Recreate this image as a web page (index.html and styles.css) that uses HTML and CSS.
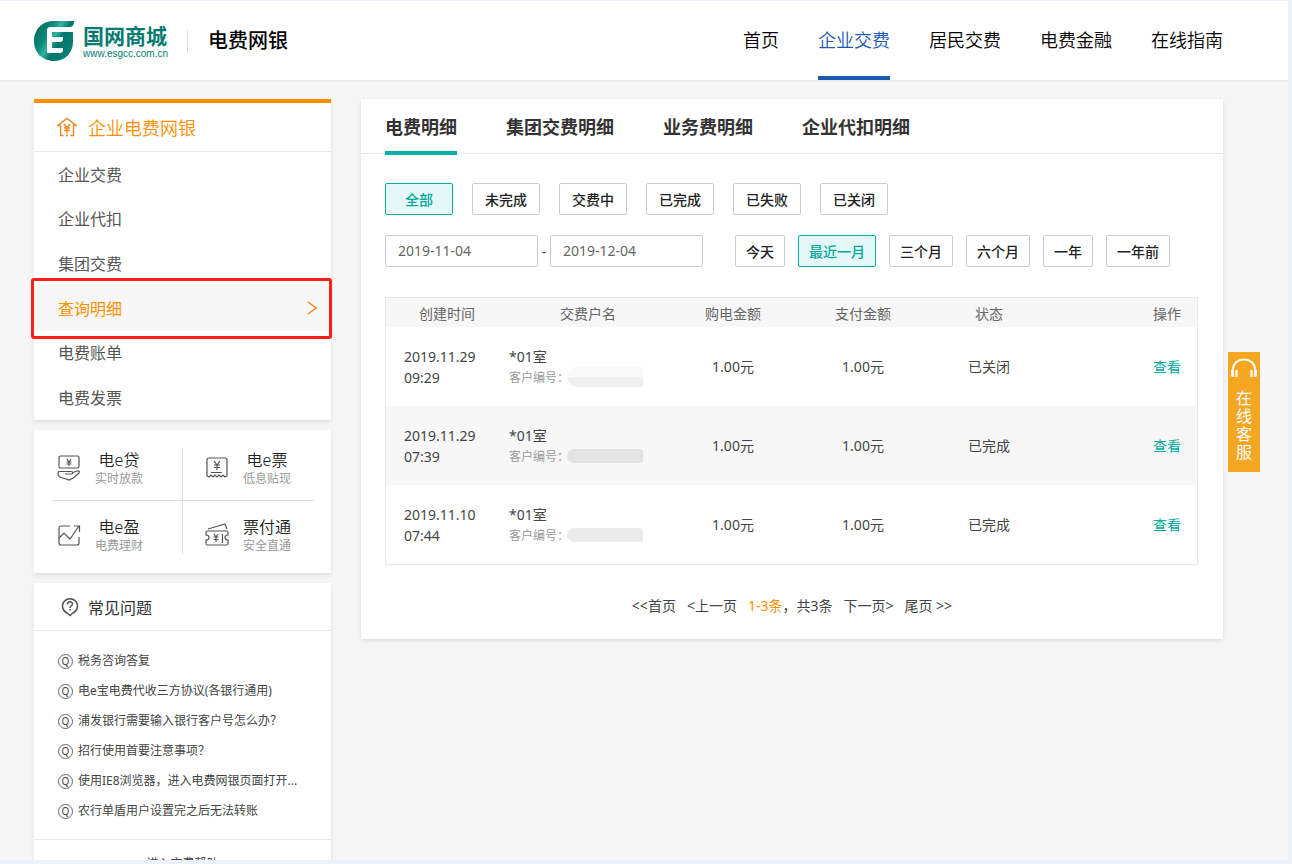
FILE: index.html
```html
<!DOCTYPE html>
<html lang="zh-CN">
  <head>
    <meta charset="UTF-8" />
    <meta name="viewport" content="width=device-width, initial-scale=1.0" />
    <title>电费网银</title>
    <link rel="stylesheet" href="styles.css">
  </head>
  <body>
    <div class="page">
      <header class="header">
        <a class="logo" href="#">
          <svg class="logo-mark" viewBox="0 0 42 42" aria-hidden="true">
            <defs>
              <linearGradient id="logoFill" x1="0" y1="0.2" x2="1" y2="0.8">
                <stop offset="0" stop-color="#04695f" />
                <stop offset="0.3" stop-color="#0b8a7c" />
                <stop offset="0.45" stop-color="#35b3a0" />
                <stop offset="0.6" stop-color="#04766c" />
                <stop offset="1" stop-color="#0b8478" />
              </linearGradient>
            </defs>
            <path fill="url(#logoFill)" d="M41 1H20C9 1 1 10 1 21s8 20 20 20c11 0 19-8 19-19V12H37V7c3 0 4-3 4-6z" />
            <path fill="#fff" d="M40 7H18c-3 0-4 1-4 4v22h13c2 0 3-1 3-3v-2H19v-6h8c2 0 3-1 3-3v-2H19v-5h18c2 0 3-1 4-2z" />
          </svg>
          <span class="logo-text">
            <strong>国网商城</strong>
            <small>www.esgcc.com.cn</small>
          </span>
        </a>
        <h1 class="site-name">电费网银</h1>
        <nav class="nav">
          <a href="#">首页</a>
          <a class="active" href="#">企业交费</a>
          <a href="#">居民交费</a>
          <a href="#">电费金融</a>
          <a href="#">在线指南</a>
        </nav>
      </header>

      <div class="content">
        <aside class="sidebar">
          <section class="card menu">
            <h2 class="menu-title">
              <svg viewBox="0 0 20 20" aria-hidden="true">
                <path d="M3.500 8.500H1L10 1.500l9 7h-2.500V18.500h-3M3.500 8.500V18.500h3M9 18.500h2" />
                <path d="M7 7l3 4 3-4M7 11h6M7 13.500h6M10 11v5.500" />
              </svg>
              企业电费网银
            </h2>
            <ul class="menu-list">
              <li><a href="#">企业交费</a></li>
              <li><a href="#">企业代扣</a></li>
              <li><a href="#">集团交费</a></li>
              <li class="active">
                <a href="#">查询明细
                  <svg viewBox="0 0 10 14" aria-hidden="true"><path d="M1 1l8 6-8 6" /></svg>
                </a>
              </li>
              <li><a href="#">电费账单</a></li>
              <li><a href="#">电费发票</a></li>
            </ul>
          </section>

          <section class="card services">
            <a href="#">
              <svg viewBox="0 0 24 26" aria-hidden="true">
                <rect x="2" y="1" width="20" height="12" rx="1.500" />
                <path d="M10 4l2 3 2-3M9.500 7h5M9.500 9h5M12 7v4" />
                <path d="M1 24v0M8 19h6c2.500 0 2.500-2.500 0-2.500H2c-1 0-1 1-1 2 0 3 2 4 5 4.500l6 2 5-2.500 5-4.500c1-1.500 0-2.500-2-2l-4 1.500" />
              </svg>
              <span><b>电e贷</b><small>实时放款</small></span>
            </a>
            <a href="#">
              <svg viewBox="0 0 24 26" aria-hidden="true">
                <path d="M2 21V5c0-1 .5-2 2-2h16c1.500 0 2 1 2 2v16l-2 1-2-2-2 2-2-2-2 2-2-2-2 2-2-2-2 2z" />
                <path d="M9 6l3 4 3-4M9 10h6M9 12.500h6M12 10v5M6 17.500h11" />
              </svg>
              <span><b>电e票</b><small>低息贴现</small></span>
            </a>
            <a href="#">
              <svg viewBox="0 0 24 26" aria-hidden="true">
                <path d="M13 4H4C2.500 4 2 5 2 6v15c0 1.500 1 2 2 2h16c1.500 0 2-1 2-2v-6" />
                <path d="M2 16l5-5 6 6L22 4M17 4h5.500v6" />
              </svg>
              <span><b>电e盈</b><small>电费理财</small></span>
            </a>
            <a href="#">
              <svg viewBox="0 0 24 26" aria-hidden="true">
                <path d="M2.500 9h19c1 0 1.500.5 1.500 1.500V13c-4 0-4 5 0 5v3.500c0 1-.5 1.500-1.500 1.500h-19c-1 0-1.500-.5-1.500-1.500V18c4 0 4-5 0-5v-2.500C1 9.500 1.500 9 2.500 9z" />
                <path d="M3 7l17-5 2 5M9 12l2 3 2-3M8.500 15h5M8.500 17.500h5M11 15v5M17.500 12v9" />
              </svg>
              <span><b>票付通</b><small>安全直通</small></span>
            </a>
          </section>

          <section class="card faq">
            <h2 class="faq-title">
              <svg viewBox="0 0 18 20" aria-hidden="true">
                <path d="M9 18.500l-3-2.500a7.500 7.500 0 1 1 6 0z" />
                <path d="M6.500 7.500c0-3.500 5-3.500 5-.5 0 2-2.500 2-2.500 4M9 12v1.500" />
              </svg>
              常见问题
            </h2>
            <ul class="faq-list">
              <li><a href="#">税务咨询答复</a></li>
              <li><a href="#">电e宝电费代收三方协议(各银行通用)</a></li>
              <li><a href="#">浦发银行需要输入银行客户号怎么办？</a></li>
              <li><a href="#">招行使用首要注意事项？</a></li>
              <li><a href="#">使用IE8浏览器，进入电费网银页面打开...</a></li>
              <li><a href="#">农行单盾用户设置完之后无法转账</a></li>
            </ul>
            <a class="faq-more" href="#">进入交费帮助</a>
          </section>
        </aside>

        <main class="card main">
          <nav class="tabs">
            <a class="active" href="#">电费明细</a>
            <a href="#">集团交费明细</a>
            <a href="#">业务费明细</a>
            <a href="#">企业代扣明细</a>
          </nav>

          <form class="filters">
            <div class="status-row">
              <button type="button" class="active">全部</button>
              <button type="button">未完成</button>
              <button type="button">交费中</button>
              <button type="button">已完成</button>
              <button type="button">已失败</button>
              <button type="button">已关闭</button>
            </div>
            <div class="date-row">
              <div class="dates">
                <input type="text" value="2019-11-04" aria-label="开始日期" />
                <span>-</span>
                <input type="text" value="2019-12-04" aria-label="结束日期" />
              </div>
              <button type="button">今天</button>
              <button type="button" class="active">最近一月</button>
              <button type="button">三个月</button>
              <button type="button">六个月</button>
              <button type="button">一年</button>
              <button type="button">一年前</button>
            </div>
          </form>

          <table class="records">
            <colgroup>
              <col class="col-time" />
              <col class="col-name" />
              <col class="col-money" />
              <col class="col-money" />
              <col class="col-status" />
              <col />
            </colgroup>
            <thead>
              <tr>
                <th>创建时间</th>
                <th>交费户名</th>
                <th>购电金额</th>
                <th>支付金额</th>
                <th>状态</th>
                <th class="action">操作</th>
              </tr>
            </thead>
            <tbody>
              <tr>
                <td class="time">2019.11.29<br />09:29</td>
                <td class="name">*01室<small>客户编号：<i class="mask light"></i></small></td>
                <td>1.00元</td>
                <td>1.00元</td>
                <td>已关闭</td>
                <td class="action"><a href="#">查看</a></td>
              </tr>
              <tr>
                <td class="time">2019.11.29<br />07:39</td>
                <td class="name">*01室<small>客户编号：<i class="mask dark"></i></small></td>
                <td>1.00元</td>
                <td>1.00元</td>
                <td>已完成</td>
                <td class="action"><a href="#">查看</a></td>
              </tr>
              <tr>
                <td class="time">2019.11.10<br />07:44</td>
                <td class="name">*01室<small>客户编号：<i class="mask"></i></small></td>
                <td>1.00元</td>
                <td>1.00元</td>
                <td>已完成</td>
                <td class="action"><a href="#">查看</a></td>
              </tr>
            </tbody>
          </table>

          <div class="pager">
            <a href="#">&lt;&lt;首页</a>
            <a href="#">&lt;上一页</a>
            <span><em>1-3条</em>，共3条</span>
            <a href="#">下一页&gt;</a>
            <a href="#">尾页 &gt;&gt;</a>
          </div>
        </main>
      </div>

      <a class="service" href="#">
        <svg viewBox="0 0 28 20" aria-hidden="true">
          <path d="M3 12C3 -2 25 -2 25 12" />
          <path class="ear" d="M1 12h3v7H3c-1.500 0-2-1-2-2zM5.500 12h2v7h-2zM20.500 12h2v7h-2zM24 12h3v5c0 1-.5 2-2 2h-1z" />
        </svg>
        <span>在线客服</span>
      </a>
    </div>
  </body>
</html>
```
FILE: styles.css
```css
* {
  box-sizing: border-box;
}

body {
  margin: 0;
  height: 100vh;
  padding: 1px 4px 4px 0;
  overflow: hidden;
  background-color: #edf2fa;
  color: #444;
  font-family: "Noto Sans", "Noto Sans CJK SC", sans-serif;
  font-size: 14px;
}

a {
  color: inherit;
  text-decoration: none;
}

ul {
  list-style: none;
  margin: 0;
  padding: 0;
}

svg {
  fill: none;
  flex: none;
}

.page {
  position: relative;
  height: 100%;
  overflow: hidden;
  background-color: #f6f6f6;
}

.header {
  display: flex;
  align-items: center;
  height: 79px;
  padding: 0 65px 0 33px;
  background-color: #fff;
  box-shadow: 0 1px 3px rgba(0, 0, 0, 0.08);
}

.logo {
  display: flex;
  align-items: center;
  gap: 8px;
  padding-right: 19px;
  color: #047a70;
}

.logo-mark {
  width: 42px;
  height: 42px;
}

.logo-text strong,
.logo-text small {
  display: block;
}

.logo-text strong {
  font-size: 21px;
  line-height: 26px;
}

.logo-text small {
  font-family: "Liberation Sans", Arial, sans-serif;
  font-size: 10px;
  line-height: 10px;
}

.site-name {
  margin: 0;
  padding-left: 20px;
  border-left: 1px solid #ddd;
  color: #000;
  font-size: 20px;
  font-weight: 500;
  line-height: 22px;
}

.nav {
  display: flex;
  align-self: stretch;
  gap: 39px;
  margin-left: auto;
  color: #000;
  font-size: 18px;
  font-weight: 350;
  line-height: 78px;
}

.nav .active {
  border-bottom: 4px solid #1c5ab2;
  color: #1c5ab2;
}

.content {
  display: flex;
  align-items: flex-start;
  gap: 30px;
  padding: 19px 65px 0 34px;
}

.card {
  background-color: #fff;
  box-shadow: 0 2px 4px rgba(0, 0, 0, 0.1);
}

.sidebar {
  display: flex;
  flex-direction: column;
  flex: none;
  gap: 10px;
  width: 297px;
}

.menu {
  border-top: 4px solid #ff9000;
}

.menu-title {
  display: flex;
  align-items: center;
  gap: 11px;
  height: 49px;
  margin: 0;
  padding-left: 23px;
  border-bottom: 1px solid #e8e8e8;
  color: #ff9000;
  font-size: 18px;
  font-weight: 350;
}

.menu-title svg {
  width: 20px;
  height: 20px;
  stroke: #f08a24;
  stroke-width: 1.5;
}

.menu-list {
  display: grid;
  grid-auto-rows: 1fr;
  height: 268px;
  color: #555;
  font-size: 16px;
}

.menu-list li {
  position: relative;
}

.menu-list a {
  display: flex;
  align-items: center;
  justify-content: space-between;
  height: 100%;
  padding: 0 14px 1px 24px;
}

.menu-list .active {
  background-color: #f7f7f7;
  color: #ff9000;
}

.menu-list .active::after {
  content: "";
  position: absolute;
  inset: -8px -1px -8px -3px;
  border: 3px solid #ff1f14;
  border-radius: 3px;
  pointer-events: none;
}

.menu-list svg {
  width: 10px;
  height: 14px;
  stroke: #f08a24;
  stroke-width: 1.5;
}

.services {
  display: grid;
  grid-template-columns: 1fr 1fr;
  grid-auto-rows: 53px;
  padding: 18px 17px 19px 18px;
}

.services a {
  display: flex;
  align-items: center;
  gap: 14px;
  padding: 15px 0 0 5px;
}

.services a:nth-child(-n + 2) {
  padding: 0 0 13px 5px;
  border-bottom: 1px solid #ddd;
}

.services a:nth-child(odd) {
  border-right: 1px solid #ddd;
}

.services a:nth-child(even) {
  padding-left: 22px;
}

.services svg {
  width: 24px;
  height: 26px;
  stroke: #555;
  stroke-width: 1.2;
}

.services span {
  text-align: center;
}

.services b,
.services small {
  display: block;
}

.services b {
  font-size: 16px;
  font-weight: 350;
  line-height: 22px;
  color: #222;
}

.services small {
  color: #999;
  font-size: 12px;
  line-height: 16px;
}

.faq-title {
  display: flex;
  align-items: center;
  gap: 9px;
  height: 48px;
  margin: 0;
  padding-left: 27px;
  border-bottom: 1px solid #e8e8e8;
  color: #333;
  font-size: 16px;
  font-weight: 400;
}

.faq-title svg {
  width: 18px;
  height: 20px;
  stroke: #555;
  stroke-width: 1.5;
}

.faq-list {
  padding: 15px 24px 13px;
  font-size: 12px;
  line-height: 30px;
}

.faq-list li {
  display: flex;
  align-items: center;
  gap: 5px;
  white-space: nowrap;
}

.faq-list li::before {
  content: "Q";
  box-sizing: border-box;
  width: 15px;
  height: 15px;
  border: 1px solid #666;
  border-radius: 50%;
  font-size: 10px;
  line-height: 13px;
  text-align: center;
}

.faq-more {
  display: block;
  border-top: 1px solid #e8e8e8;
  font-size: 12px;
  line-height: 48px;
  text-align: center;
}

.main {
  flex: 1;
  min-width: 0;
}

.tabs {
  display: flex;
  gap: 49px;
  height: 55px;
  padding: 0 24px;
  border-bottom: 1px solid #e8e8e8;
  color: #333;
  font-size: 18px;
  font-weight: bold;
  line-height: 56px;
}

.tabs a {
  height: 56px;
}

.tabs .active {
  border-bottom: 4px solid #00b1a5;
}

.filters {
  padding: 29px 24px 30px;
}

.filters button {
  height: 32px;
  padding: 0 10px 1px;
  border: 1px solid #ccc;
  border-radius: 2px;
  background-color: #fff;
  color: #222;
  font-family: inherit;
  font-size: 14px;
  font-weight: 500;
  white-space: nowrap;
}

.filters .active {
  border-color: #00b1a5;
  background-color: #e5f7f6;
  color: #00a99d;
}

.status-row {
  display: flex;
  gap: 19px;
}

.status-row button {
  width: 68px;
}

.date-row {
  display: flex;
  gap: 13px;
  margin-top: 20px;
}

.dates {
  display: flex;
  align-items: center;
  margin-right: 19px;
}

.dates input {
  width: 153px;
  height: 32px;
  padding: 0 12px 1px;
  border: 1px solid #ccc;
  border-radius: 2px;
  color: #666;
  font-family: inherit;
  font-size: 14px;
}

.dates span {
  width: 12px;
  text-align: center;
}

.records {
  width: calc(100% - 49px);
  margin: 0 24px;
  border: 1px solid #e8e8e8;
  border-spacing: 0;
  table-layout: fixed;
  text-align: center;
}

.col-time,
.col-status {
  width: 122px;
}

.col-name {
  width: 160px;
}

.col-money {
  width: 130px;
}

.records th {
  height: 29px;
  padding: 0;
  background-color: #f7f7f7;
  color: #666;
  font-weight: 400;
}

.records td {
  height: 79px;
  padding: 0;
  line-height: 21px;
}

.records tr:nth-child(even) td {
  background-color: #f7f7f7;
}

.records .time {
  padding-left: 18px;
  text-align: left;
}

.records .name {
  padding-left: 1px;
  text-align: left;
}

.records .name small {
  display: flex;
  align-items: center;
  color: #999;
  font-size: 12px;
}

.mask {
  width: 76px;
  height: 14px;
  margin-left: -2px;
  border-radius: 8px 4px 4px 8px;
  background-color: #ebebeb;
}

.mask.light {
  height: 20px;
  border-radius: 10px 0 0 10px;
  background-image: linear-gradient(#f9f9f9 50%, #f0f0f0 50%);
}

.mask.dark {
  background-color: #e3e3e3;
}

.records .action {
  padding-right: 16px;
  text-align: right;
}

.records td a {
  color: #00a99d;
}

.pager {
  display: flex;
  justify-content: center;
  gap: 11px;
  padding: 30px 0 23px;
  line-height: 21px;
}

.pager em {
  color: #ff9000;
  font-style: normal;
}

/* floating customer service button */
.service {
  position: fixed;
  top: 352px;
  right: 32px;
  width: 32px;
  height: 120px;
  padding-top: 6px;
  background-color: #f5a623;
  color: #fff;
  text-align: center;
}

.service svg {
  display: block;
  width: 28px;
  height: 20px;
  margin: 0 auto;
  stroke: #fff;
  stroke-width: 2;
}

.service .ear {
  fill: #fff;
  stroke: none;
}

.service span {
  display: block;
  width: 16px;
  margin: 11px auto 0;
  font-size: 16px;
  line-height: 18px;
}
```
